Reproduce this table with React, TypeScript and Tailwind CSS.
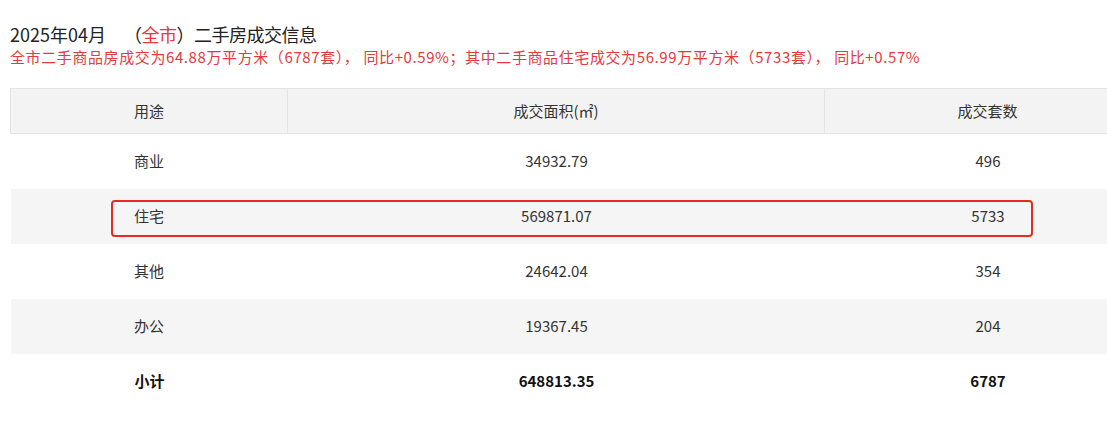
import React from "react";

const rows = [
  { use: "商业", area: "34932.79", count: "496" },
  { use: "住宅", area: "569871.07", count: "5733" },
  { use: "其他", area: "24642.04", count: "354" },
  { use: "办公", area: "19367.45", count: "204" },
];

const font = { fontFamily: '"Microsoft YaHei", "Noto Sans CJK SC", "Noto Sans", sans-serif' };

export default function App() {
  return (
    <div className="w-[1107px] h-[429px] overflow-hidden bg-white text-[#333]" style={font}>
      <div className="pl-[10px] pt-[22px]">
        <div className="text-[18px] leading-[24px] text-[#222] flex">
          <span>2025年04月</span>
          <span className="ml-[18px] tracking-[-0.5px]">（<span className="text-[#e4393c]">全市</span>）二手房成交信息</span>
        </div>
        <div className="text-[15px] leading-[20px] text-[#e4393c] mt-[1px] whitespace-nowrap tracking-[0.6px]">
          全市二手商品房成交为64.88万平方米（6787套）， 同比+0.59%；其中二手商品住宅成交为56.99万平方米（5733套）， 同比+0.57%
        </div>
      </div>
      <div className="relative ml-[10px] mt-[21px] w-[1141px]">
        <div className="grid grid-cols-[277px_537px_1fr] h-[46px] bg-[#f3f3f3] border border-[#e3e3e3] text-[15px] items-stretch">
          <div className="flex items-center justify-center border-r border-[#e3e3e3]">用途</div>
          <div className="flex items-center justify-center border-r border-[#e3e3e3]">成交面积(㎡)</div>
          <div className="flex items-center justify-center">成交套数</div>
        </div>
        {rows.map((r, i) => (
          <div
            key={r.use}
            className={`grid grid-cols-[277px_537px_1fr] h-[55px] text-[15px] ml-[1px] ${i % 2 === 1 ? "bg-[#f5f5f5]" : "bg-white"}`}
          >
            <div className="flex items-center justify-center pr-[1px]">{r.use}</div>
            <div className="flex items-center justify-center">{r.area}</div>
            <div className="flex items-center justify-center">{r.count}</div>
          </div>
        ))}
        <div className="grid grid-cols-[277px_537px_1fr] h-[55px] text-[15px] font-bold text-[#111] ml-[1px]">
          <div className="flex items-center justify-center">小计</div>
          <div className="flex items-center justify-center">648813.35</div>
          <div className="flex items-center justify-center">6787</div>
        </div>
        <div className="absolute left-[101px] top-[112px] w-[922px] h-[37px] border-2 border-[#e8291f] rounded-[4px] pointer-events-none" />
      </div>
    </div>
  );
}
